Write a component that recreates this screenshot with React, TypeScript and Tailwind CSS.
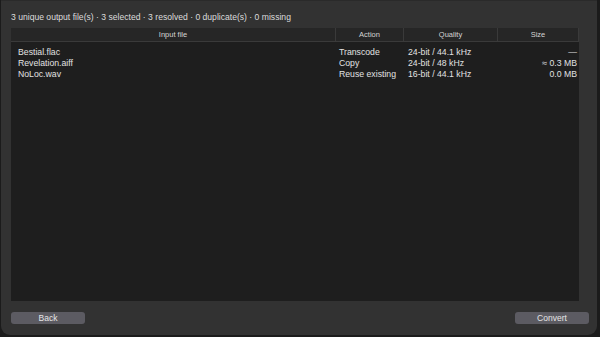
import React from 'react';

interface Row {
  file: string;
  action: string;
  quality: string;
  size: string;
}

const rows: Row[] = [
  { file: 'Bestial.flac', action: 'Transcode', quality: '24-bit / 44.1 kHz', size: '—' },
  { file: 'Revelation.aiff', action: 'Copy', quality: '24-bit / 48 kHz', size: '≈ 0.3 MB' },
  { file: 'NoLoc.wav', action: 'Reuse existing', quality: '16-bit / 44.1 kHz', size: '0.0 MB' },
];

const font = { fontFamily: '"Liberation Sans", Arial, sans-serif' };

const App: React.FC = () => {
  return (
    <div className="w-[600px] h-[337px] bg-[#1b1b1b]" style={font}>
      <div className="ml-[1px] w-[596px] h-[335px] bg-[#323232] rounded-b-[9px] border-t border-[#2a2a2a] flex flex-col pl-[10px] pr-[8px]">
        <div className="pt-[10px] h-[27px] text-[8.6px] leading-[12px] text-[#dcdcdc]">
          3 unique output file(s) · 3 selected · 3 resolved · 0 duplicate(s) · 0 missing
        </div>

        <div className="w-[568px] flex-1 bg-[#1e1e1e] flex flex-col">
          <div className="h-[14px] bg-[#262626] border-b border-[#3a3a3a] flex text-[7.5px] font-medium text-[#d4d4d4] leading-[13px]">
            <div className="w-[325px] text-center border-r border-[#3a3a3a]">Input file</div>
            <div className="w-[68px] text-center border-r border-[#3a3a3a]">Action</div>
            <div className="w-[94px] text-center border-r border-[#3a3a3a]">Quality</div>
            <div className="w-[81px] text-center border-r border-[#3a3a3a]">Size</div>
          </div>
          <div className="pt-[5px] flex flex-col text-[8.7px] leading-[11px] text-[#e2e2e2]">
            {rows.map(r => (
              <div key={r.file} className="flex">
                <div className="w-[325px] pl-[7px]">{r.file}</div>
                <div className="w-[68px] pl-[3px] whitespace-nowrap">{r.action}</div>
                <div className="w-[94px] pl-[4px]">{r.quality}</div>
                <div className="w-[81px] pr-[2px] text-right">{r.size}</div>
              </div>
            ))}
          </div>
        </div>

        <div className="h-[34px] pt-[11px] flex justify-between">
          <button className="w-[74px] h-[12px] rounded-[3px] bg-[#5c5b62] text-[8.5px] leading-[12px] text-[#e6e6e6]">
            Back
          </button>
          <button className="w-[74px] h-[12px] rounded-[3px] bg-[#5c5b62] text-[8.5px] leading-[12px] text-[#e6e6e6]">
            Convert
          </button>
        </div>
      </div>
    </div>
  );
};

export default App;
